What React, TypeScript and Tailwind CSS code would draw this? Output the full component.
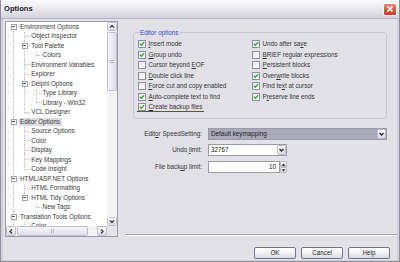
import React from "react";

type Row = { t: string; g: string; box?: boolean; sel?: boolean };

const rows: Row[] = [
  { t: "Environment Options", g: "F", box: true },
  { t: "Object Inspector", g: "|T" },
  { t: "Tool Palette", g: "|T", box: true },
  { t: "Colors", g: "||L" },
  { t: "Environment Variables", g: "|T" },
  { t: "Explorer", g: "|T" },
  { t: "Delphi Options", g: "|T", box: true },
  { t: "Type Library", g: "||T" },
  { t: "Library - Win32", g: "||L" },
  { t: "VCL Designer", g: "|L" },
  { t: "Editor Options", g: "T", box: true, sel: true },
  { t: "Source Options", g: "|T" },
  { t: "Color", g: "|T" },
  { t: "Display", g: "|T" },
  { t: "Key Mappings", g: "|T" },
  { t: "Code Insight", g: "|L" },
  { t: "HTML/ASP.NET Options", g: "T", box: true },
  { t: "HTML Formatting", g: "|T" },
  { t: "HTML Tidy Options", g: "|L", box: true },
  { t: "New Tags", g: "| L" },
  { t: "Translation Tools Options", g: "T", box: true },
  { t: "Color", g: "|T" },
];

const LINE = "#bdbdc6";

function Gutter({ g, box }: { g: string; box?: boolean }) {
  const H = 9.5;
  const cy = 4.5;
  const w = 14 + 11.3 * (g.length - 1);
  const els: React.ReactNode[] = [];
  g.split("").forEach((c, i) => {
    const cx = Math.round(7 + 11.3 * i) + 0.5;
    const hEnd = w - 0.5;
    const dash = { stroke: LINE, strokeWidth: 1, strokeDasharray: "1 1" };
    if (c === "|") els.push(<line key={i + "v"} x1={cx} y1={0} x2={cx} y2={H} {...dash} />);
    if (c === "T") {
      els.push(<line key={i + "v"} x1={cx} y1={0} x2={cx} y2={H} {...dash} />);
      els.push(<line key={i + "h"} x1={cx} y1={cy} x2={hEnd} y2={cy} {...dash} />);
    }
    if (c === "L") {
      els.push(<line key={i + "v"} x1={cx} y1={0} x2={cx} y2={cy} {...dash} />);
      els.push(<line key={i + "h"} x1={cx} y1={cy} x2={hEnd} y2={cy} {...dash} />);
    }
    if (c === "F") {
      els.push(<line key={i + "v"} x1={cx} y1={cy} x2={cx} y2={H} {...dash} />);
      els.push(<line key={i + "h"} x1={cx} y1={cy} x2={hEnd} y2={cy} {...dash} />);
    }
    if (box && i === g.length - 1) {
      els.push(
        <rect key="b" x={cx - 2.5} y={cy - 2.5} width={5} height={5} fill="#fff" stroke="#9a9aa8" strokeWidth={0.9} />
      );
      els.push(<line key="m" x1={cx - 1.3} y1={cy} x2={cx + 1.3} y2={cy} stroke="#444" strokeWidth={0.9} />);
    }
  });
  return (
    <svg width={w} height={H} className="shrink-0 block" shapeRendering="crispEdges">
      {els}
    </svg>
  );
}

function Chevron({ dir }: { dir: "up" | "down" | "left" | "right" }) {
  const pts = {
    up: "2,5.5 4,3.5 6,5.5",
    down: "2,3.5 4,5.5 6,3.5",
    left: "5,2.5 3,4.5 5,6.5",
    right: "3,2.5 5,4.5 3,6.5",
  }[dir];
  return (
    <svg width="8" height="9" viewBox="0 0 8 9" className="block">
      <polyline points={pts} fill="none" stroke="#3c3c48" strokeWidth="1.3" />
    </svg>
  );
}

function SBtn({ dir, cls }: { dir: "up" | "down" | "left" | "right"; cls: string }) {
  return (
    <div
      className={`${cls} shrink-0 flex items-center justify-center rounded-[1.5px] border border-[#bdbdcc] bg-gradient-to-b from-[#fbfbfd] to-[#dcdce6]`}
    >
      <Chevron dir={dir} />
    </div>
  );
}

function Tree() {
  return (
    <div className="ml-[2px] w-[113px] h-[216px] border border-[#9c9cab] bg-white flex flex-col shrink-0">
      <div className="flex flex-1 min-h-0">
        <div className="flex-1 overflow-hidden pt-0 text-[6.3px] text-[#3a3a3a]">
          {rows.map((r, i) => (
            <div key={i} className="h-[9.5px] flex items-center whitespace-nowrap leading-none">
              <Gutter g={r.g} box={r.box} />
              {r.sel ? (
                <span className="-ml-[1.3px] pl-[1.3px] pr-[1.6px] h-[8px] flex items-center bg-[#dcdce2]">{r.t}</span>
              ) : (
                <span>{r.t}</span>
              )}
            </div>
          ))}
        </div>
        <div className="w-[10px] flex flex-col bg-[#f3f3f6]">
          <SBtn dir="up" cls="h-[9px] w-[10px]" />
          <div className="flex-1 pt-[1px]">
            <div className="h-[59px] w-[10px] rounded-[1.5px] border border-[#bdbdcc] bg-gradient-to-r from-[#f4f4f8] to-[#dedee8] flex items-center justify-center">
              <div className="w-[4px] h-[3px] border-y border-[#b0b0c0]" />
            </div>
          </div>
          <SBtn dir="down" cls="h-[9px] w-[10px]" />
        </div>
      </div>
      <div className="h-[10px] flex bg-[#f3f3f6]">
        <SBtn dir="left" cls="w-[10px] h-[10px]" />
        <div className="flex-1">
          <div className="ml-[1px] w-[71px] h-[10px] rounded-[1.5px] border border-[#bdbdcc] bg-gradient-to-b from-[#f6f6fa] to-[#dedee8] flex items-center justify-center">
            <div className="w-[3px] h-[4px] border-x border-[#b0b0c0]" />
          </div>
        </div>
        <SBtn dir="right" cls="w-[10px] h-[10px]" />
        <div className="w-[10px] h-[10px] bg-[#e4e3ea]" />
      </div>
    </div>
  );
}

function Check({ on }: { on: boolean }) {
  return (
    <div className="w-[8px] h-[8px] shrink-0 border border-[#8f8fa6] bg-gradient-to-br from-[#e6e6ee] to-[#ffffff] flex items-center justify-center">
      {on && (
        <svg width="6" height="6" viewBox="0 0 6 6" className="block">
          <polyline points="0.8,2.8 2.3,4.3 5.2,1.3" fill="none" stroke="#2cb22c" strokeWidth="1.3" />
        </svg>
      )}
    </div>
  );
}

function U({ children }: { children: React.ReactNode }) {
  return <span className="underline underline-offset-[0.5px] decoration-[0.5px]">{children}</span>;
}

function CB({ on, children, red }: { on: boolean; children: React.ReactNode; red?: boolean }) {
  return (
    <div className="h-[10.5px] flex items-center gap-[2.5px] whitespace-nowrap relative">
      <Check on={on} />
      <span className="leading-none">{children}</span>
      {red && <div className="absolute left-[-1px] top-[9px] w-[67px] h-[1.3px] bg-[#e3161c]" />}
    </div>
  );
}

function DropBtn() {
  return (
    <div className="w-[9px] h-full shrink-0 flex items-center justify-center rounded-[1.5px] border border-[#b9b9c8] bg-gradient-to-b from-[#ffffff] to-[#dadae4]">
      <svg width="7" height="6" viewBox="0 0 7 6" className="block">
        <polyline points="1.5,2 3.5,4 5.5,2" fill="none" stroke="#2a2a35" strokeWidth="1.4" />
      </svg>
    </div>
  );
}

function Btn({ children }: { children: React.ReactNode }) {
  return (
    <div className="w-[42px] h-[12px] rounded-[2px] border border-[#74748a] bg-gradient-to-b from-[#ffffff] via-[#f1f1f5] to-[#d8d8e2] flex items-center justify-center text-[6.3px] leading-none text-[#222]">
      {children}
    </div>
  );
}

export default function App() {
  return (
    <div className="w-[400px] h-[262px] overflow-hidden bg-[#cfcfd8] font-['Liberation_Sans',Arial,sans-serif] text-[#333] flex flex-col border-l border-r border-b border-[#8f8fa0]">
      <div className="h-[19px] shrink-0 flex items-center justify-between pl-[3px] pr-[2px] bg-gradient-to-b from-[#fbfbfd] via-[#e9e9ef] to-[#d2d2dc] border-b border-[#b4b4c2]">
        <span className="text-[7.6px] font-bold text-[#1e1e24] leading-none">Options</span>
        <div className="w-[14px] h-[13px] rounded-[2px] border border-white bg-gradient-to-b from-[#ee8b74] via-[#d95a44] to-[#c0412c] flex items-center justify-center">
          <svg width="8" height="8" viewBox="0 0 8 8" className="block">
            <path d="M1.5 1.5 L6.5 6.5 M6.5 1.5 L1.5 6.5" stroke="#fff" strokeWidth="1.6" />
          </svg>
        </div>
      </div>
      <div className="flex-1 mx-[2px] mb-[1px] bg-[#e2e1e8] flex flex-col text-[6.3px]">
        <div className="h-[218px] pt-[2px] flex shrink-0">
          <Tree />
          <div className="flex-1 flex flex-col">
            <div className="mt-[11px] ml-[15px] mr-[10px] h-[87px] rounded-[3px] border border-[#c6c6d0] relative pt-[6px] pl-[4px]">
              <span className="absolute left-[5px] -top-[4.5px] h-[8px] px-[1px] leading-[8px] bg-[#e2e1e8] text-[#2d4bd6]">
                Editor options
              </span>
              <div className="grid grid-cols-[114px_1fr]">
                <CB on>
                  <U>I</U>nsert mode
                </CB>
                <CB on>
                  Undo after sa<U>v</U>e
                </CB>
                <CB on>
                  <U>G</U>roup undo
                </CB>
                <CB on={false}>
                  <U>B</U>RIEF regular expressions
                </CB>
                <CB on={false}>
                  Cursor beyond <U>E</U>OF
                </CB>
                <CB on={false}>
                  <U>P</U>ersistent blocks
                </CB>
                <CB on={false}>
                  <U>D</U>ouble click line
                </CB>
                <CB on>
                  Over<U>w</U>rite blocks
                </CB>
                <CB on={false}>
                  <U>F</U>orce cut and copy enabled
                </CB>
                <CB on>
                  Find te<U>x</U>t at cursor
                </CB>
                <CB on>
                  <U>A</U>uto-complete text to find
                </CB>
                <CB on>
                  P<U>r</U>eserve line ends
                </CB>
                <CB on red>
                  <U>C</U>reate backup files
                </CB>
                <div />
              </div>
            </div>

            <div className="mt-[9px] flex items-center h-[12px] mr-[10px] ml-[15px]">
              <div className="w-[69px] text-right leading-none text-[#333]">
                Edit<U>o</U>r SpeedSetting:
              </div>
              <div className="ml-[6px] flex-1 h-[12px] border border-[#9a9aab] bg-[#aaa9b8] flex items-center">
                <span className="flex-1 pl-[2px] leading-none text-[#222]">Default keymapping</span>
                <DropBtn />
              </div>
            </div>

            <div className="mt-[4px] flex items-center h-[12px] ml-[15px]">
              <div className="w-[69px] text-right leading-none text-[#333]">
                Undo <U>l</U>imit:
              </div>
              <div className="ml-[6px] w-[79px] h-[12px] border border-[#9a9aab] bg-white flex items-center">
                <span className="flex-1 pl-[2px] leading-none text-[#222]">32767</span>
                <DropBtn />
              </div>
            </div>

            <div className="mt-[5px] flex items-center h-[12px] ml-[15px]">
              <div className="w-[69px] text-right leading-none text-[#333]">
                File back<U>u</U>p limit:
              </div>
              <div className="ml-[6px] w-[72px] h-[12px] border border-[#9a9aab] bg-white flex items-center justify-end pr-[3px]">
                <span className="leading-none text-[#222]">10</span>
              </div>
              <div className="w-[7px] h-[12px] flex flex-col">
                <div className="flex-1 rounded-[1px] border border-[#b9b9c8] bg-gradient-to-b from-white to-[#dcdce6] flex items-center justify-center">
                  <svg width="5" height="3" viewBox="0 0 5 3" className="block">
                    <polygon points="0.5,2.8 2.5,0.5 4.5,2.8" fill="#2a2a35" />
                  </svg>
                </div>
                <div className="flex-1 rounded-[1px] border border-[#b9b9c8] bg-gradient-to-b from-white to-[#dcdce6] flex items-center justify-center">
                  <svg width="5" height="3" viewBox="0 0 5 3" className="block">
                    <polygon points="0.5,0.2 2.5,2.5 4.5,0.2" fill="#2a2a35" />
                  </svg>
                </div>
              </div>
            </div>

            <div className="flex-1" />
            <div className="ml-[7px] mb-[1px] h-[2px] border-t border-[#a6a5b2] border-b border-b-white" />
          </div>
        </div>
        <div className="mt-[10px] flex justify-end gap-[5px] pr-[7px]">
          <Btn>OK</Btn>
          <Btn>Cancel</Btn>
          <Btn>Help</Btn>
        </div>
      </div>
    </div>
  );
}
